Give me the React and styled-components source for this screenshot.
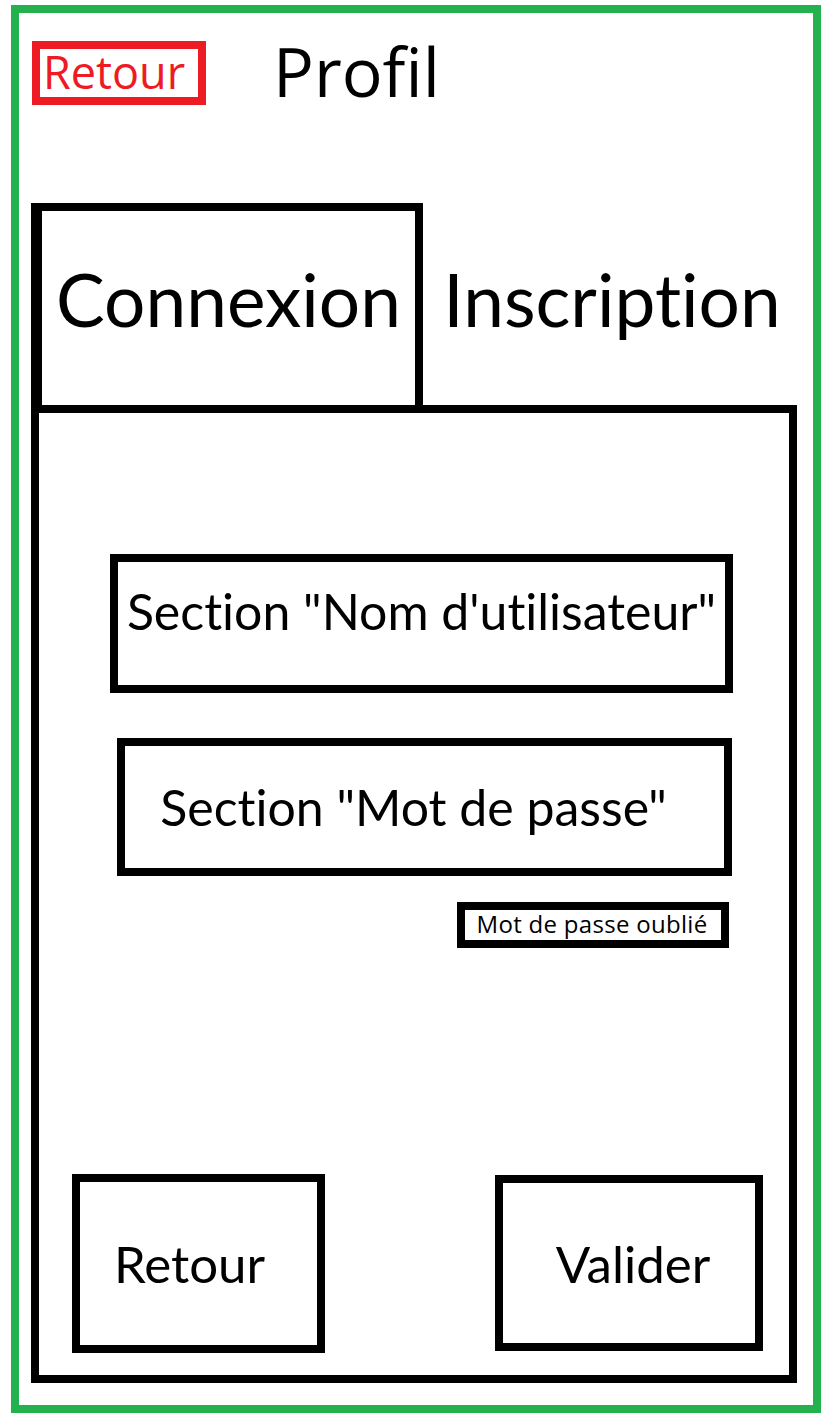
import React from 'react';
import styled, { createGlobalStyle } from 'styled-components';

const GlobalStyle = createGlobalStyle`
  html, body {
    margin: 0;
    padding: 0;
    background: #fff;
  }

  * {
    box-sizing: border-box;
  }
`;

const Frame = styled.div`
  margin: 5px 11px 0;
  height: 1408px;
  border: 8px solid #22b14c;
  display: flex;
  flex-direction: column;
  padding: 28px 16px 22px 12px;
  font-family: Lato, 'Open Sans', sans-serif;
  font-variant-ligatures: none;
  color: #000;
`;

const Header = styled.div`
  display: flex;
  align-items: center;
  height: 64px;
`;

const BackLink = styled.div`
  width: 174px;
  height: 64px;
  margin-left: 1px;
  border: 8px solid #ed1c24;
  color: #ed1c24;
  font-family: 'Open Sans', sans-serif;
  font-size: 45px;
  line-height: 1;
  display: flex;
  align-items: center;
  justify-content: center;
  padding-right: 10px;
  padding-bottom: 4px;
`;

const Title = styled.h1`
  margin: 0 0 0 67px;
  font-family: 'Open Sans', sans-serif;
  font-weight: 400;
  font-size: 68px;
  line-height: 1;
  padding-bottom: 4px;
`;

const Tabs = styled.div`
  display: flex;
  height: 202px;
  margin-top: 98px;
`;

const Tab = styled.div`
  display: flex;
  align-items: center;
  justify-content: center;
  font-size: 73px;
  line-height: 1;
  padding-bottom: 18px;
  ${({ $active }) =>
    $active
      ? `
    width: 392px;
    border: 8px solid #000;
    border-left-width: 11px;
    border-bottom: none;
  `
      : `
    flex: 1;
    padding-top: 8px;
    padding-left: 4px;
  `}
`;

const Card = styled.div`
  flex: 1;
  border: 8px solid #000;
  display: flex;
  flex-direction: column;
  padding: 141px 0 22px 0;
`;

const Fields = styled.div`
  display: flex;
  flex-direction: column;
  align-items: flex-end;
  padding-right: 56px;
`;

const Field = styled.div`
  width: ${({ $w }) => $w}px;
  height: ${({ $h }) => $h}px;
  margin-top: ${({ $top }) => $top || 0}px;
  margin-right: ${({ $right }) => $right || 0}px;
  border: 8px solid #000;
  display: flex;
  align-items: center;
  justify-content: center;
  font-size: 50px;
  line-height: 1;
  padding-bottom: ${({ $lift }) => $lift || 0}px;
  padding-right: ${({ $shift }) => $shift || 0}px;
`;

const Forgot = styled.div`
  width: 272px;
  height: 46px;
  margin-top: 26px;
  margin-right: 4px;
  border: 8px solid #000;
  display: flex;
  align-items: center;
  justify-content: center;
  font-family: 'Open Sans', sans-serif;
  font-size: 24px;
  letter-spacing: 0.3px;
  line-height: 1;
  padding-bottom: 2px;
  padding-right: 2px;
`;

const Actions = styled.div`
  margin-top: auto;
  display: flex;
  justify-content: space-between;
  align-items: flex-start;
  padding: 0 26px 0 33px;
`;

const ActionButton = styled.div`
  width: ${({ $w }) => $w}px;
  height: ${({ $h }) => $h}px;
  margin-top: ${({ $top }) => $top || 0}px;
  border: 8px solid #000;
  display: flex;
  align-items: center;
  justify-content: center;
  font-size: 51px;
  line-height: 1;
  padding-right: ${({ $shift }) => $shift || 0}px;
  padding-left: ${({ $push }) => $push || 0}px;
`;

export default function App() {
  return (
    <>
      <GlobalStyle />
      <Frame>
        <Header>
          <BackLink>Retour</BackLink>
          <Title>Profil</Title>
        </Header>
        <Tabs>
          <Tab $active>Connexion</Tab>
          <Tab>Inscription</Tab>
        </Tabs>
        <Card>
          <Fields>
            <Field $w={623} $h={139} $lift={26}>Section "Nom d'utilisateur"</Field>
            <Field $w={615} $h={138} $top={45} $right={1} $shift={22}>Section "Mot de passe"</Field>
            <Forgot>Mot de passe oublié</Forgot>
          </Fields>
          <Actions>
            <ActionButton $w={253} $h={179} $shift={18}>Retour</ActionButton>
            <ActionButton $w={268} $h={176} $top={1} $push={8}>Valider</ActionButton>
          </Actions>
        </Card>
      </Frame>
    </>
  );
}
